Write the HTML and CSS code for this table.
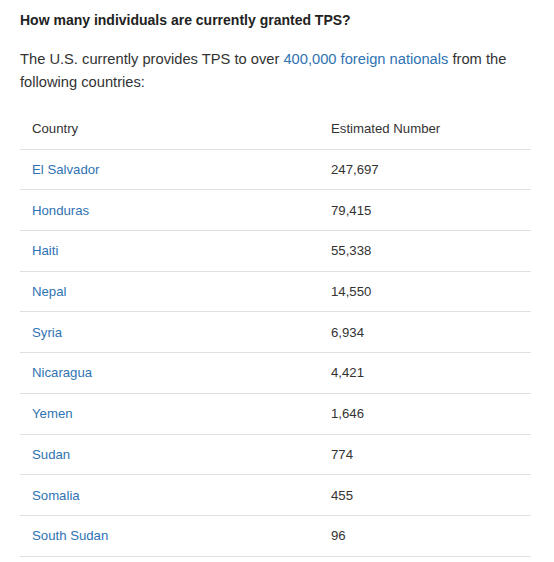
FILE: index.html
```html
<!DOCTYPE html>
<html>
<head>
<meta charset="utf-8">
<link rel="stylesheet" href="styles.css">
</head>
<body>
<div class="page">
  <h3 class="title">How many individuals are currently granted TPS?</h3>
  <p class="intro">The U.S. currently provides TPS to over <a href="#">400,000 foreign nationals</a> from the following countries:</p>
  <table class="tps">
    <thead>
      <tr><th class="c1">Country</th><th>Estimated Number</th></tr>
    </thead>
    <tbody>
      <tr><td><a href="#">El Salvador</a></td><td>247,697</td></tr>
      <tr><td><a href="#">Honduras</a></td><td>79,415</td></tr>
      <tr><td><a href="#">Haiti</a></td><td>55,338</td></tr>
      <tr><td><a href="#">Nepal</a></td><td>14,550</td></tr>
      <tr><td><a href="#">Syria</a></td><td>6,934</td></tr>
      <tr><td><a href="#">Nicaragua</a></td><td>4,421</td></tr>
      <tr><td><a href="#">Yemen</a></td><td>1,646</td></tr>
      <tr><td><a href="#">Sudan</a></td><td>774</td></tr>
      <tr><td><a href="#">Somalia</a></td><td>455</td></tr>
      <tr><td><a href="#">South Sudan</a></td><td>96</td></tr>
    </tbody>
  </table>
</div>
</body>
</html>
```
FILE: styles.css
```css
html, body {
  margin: 0;
  padding: 0;
  background: #fff;
}
body {
  font-family: "Liberation Sans", Arial, sans-serif;
  color: #333;
}
.page {
  padding: 10px 23px 0 20px;
}
.title {
  margin: 0;
  font-size: 14px;
  font-weight: bold;
  line-height: 20px;
  color: #222;
}
.intro {
  margin: 18px 0 0 0;
  font-size: 14.7px;
  line-height: 23px;
  color: #333;
}
a {
  color: #2f73b3;
  text-decoration: none;
}
.tps {
  margin-top: 15px;
  width: 100%;
  border-collapse: collapse;
  font-size: 13.2px;
}
.tps th, .tps td {
  text-align: left;
  font-weight: normal;
  padding: 0 12px;
  height: 39.7px;
  border-bottom: 1px solid #e0e0e0;
  vertical-align: middle;
}
.tps th.c1 {
  width: 275px;
}
```
